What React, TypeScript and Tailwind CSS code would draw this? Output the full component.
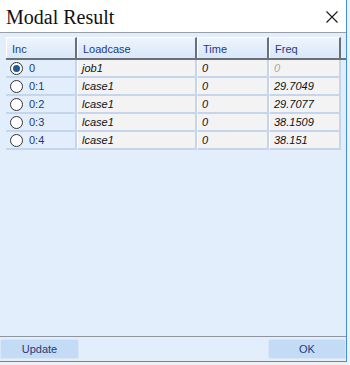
const rows = [
  { inc: "0", lc: "job1", time: "0", freq: "0", on: true },
  { inc: "0:1", lc: "lcase1", time: "0", freq: "29.7049" },
  { inc: "0:2", lc: "lcase1", time: "0", freq: "29.7077" },
  { inc: "0:3", lc: "lcase1", time: "0", freq: "38.1509" },
  { inc: "0:4", lc: "lcase1", time: "0", freq: "38.151" },
];

const cols = ["w-[71px]", "w-[120px]", "w-[72px]", "w-[72px]"];

function Radio({ on }: { on?: boolean }) {
  return (
    <span className="w-[13px] h-[13px] rounded-full border border-[#333] bg-white flex items-center justify-center shrink-0">
      {on && <span className="w-[7px] h-[7px] rounded-full bg-[#1f5a96]" />}
    </span>
  );
}

function HeadCell({ label, w }: { label: string; w: string }) {
  return (
    <div
      className={`${w} h-full flex items-center pl-[5px] pt-[2px] border-r-2 border-r-[#6a6f78] border-t border-t-white border-l border-l-white bg-gradient-to-b from-[#eef4fd] to-[#d9e7f9] text-[#1d3b7c]`}
    >
      {label}
    </div>
  );
}

export default function App() {
  return (
    <div className="w-[350px] h-[365px] bg-[#f0f0f0] relative" style={{ fontFamily: "'Liberation Sans', Arial, sans-serif" }}>
      <div className="w-[347px] h-[362px] border-r border-b border-[#3f8ee0] flex flex-col bg-white">
        <div className="h-[33px] shrink-0 flex items-center justify-between pl-[6px] pr-[8px] border-b border-[#9aa0a8]">
          <span className="text-[20px] text-[#111] leading-none pt-[1px]" style={{ fontFamily: "'Liberation Serif', 'Times New Roman', serif" }}>
            Modal Result
          </span>
          <svg width="12" height="12" viewBox="0 0 12 12" className="mt-[1px]">
            <path d="M0.5 0.5 L11.5 11.5 M11.5 0.5 L0.5 11.5" stroke="#1a1a1a" strokeWidth="1.1" fill="none" />
          </svg>
        </div>
        <div className="flex-1 bg-[#e3eefc] pt-[4px] pl-[6px] flex flex-col">
          <div className="flex h-[23px] text-[11px] border-b-2 border-b-[#6a6f78]">
            <HeadCell label="Inc" w={cols[0]} />
            <HeadCell label="Loadcase" w={cols[1]} />
            <HeadCell label="Time" w={cols[2]} />
            <HeadCell label="Freq" w={cols[3]} />
          </div>
          {rows.map((r) => (
            <div key={r.inc} className="flex h-[18px] text-[11px]">
              <div className={`${cols[0]} flex items-center gap-[6px] pl-[4px] border-b-2 border-r-2 border-[#c4d5ec] text-[#1d3b7c]`}>
                <Radio on={r.on} />
                <span>{r.inc}</span>
              </div>
              <div className={`${cols[1]} flex items-center pl-[4px] italic bg-[#f3f3f3] border-b-2 border-r-2 border-[#c4d5ec] border-l border-l-white text-[#111]`}>
                {r.lc}
              </div>
              <div className={`${cols[2]} flex items-center pl-[4px] italic bg-[#f3f3f3] border-b-2 border-r-2 border-[#c4d5ec] border-l border-l-white text-[#111]`}>
                {r.time}
              </div>
              <div
                className={`${cols[3]} flex items-center pl-[4px] italic bg-[#f3f3f3] border-b-2 border-r-2 border-[#c4d5ec] border-l border-l-white ${r.on ? "text-[#a8a8a8]" : "text-[#111]"}`}
              >
                {r.freq}
              </div>
            </div>
          ))}
        </div>
        <div className="h-[25px] shrink-0 bg-[#e3eefc] border-t border-[#8f959c] flex items-center justify-between text-[11px] text-[#1d3b7c]">
          <button className="w-[79px] h-[20px] bg-[#c4dbf6] border border-[#d9e6f7] rounded-[2px] flex items-center justify-center">
            Update
          </button>
          <button className="w-[78px] h-[20px] bg-[#c4dbf6] border border-[#d9e6f7] rounded-[2px] flex items-center justify-center">
            OK
          </button>
        </div>
      </div>
    </div>
  );
}
